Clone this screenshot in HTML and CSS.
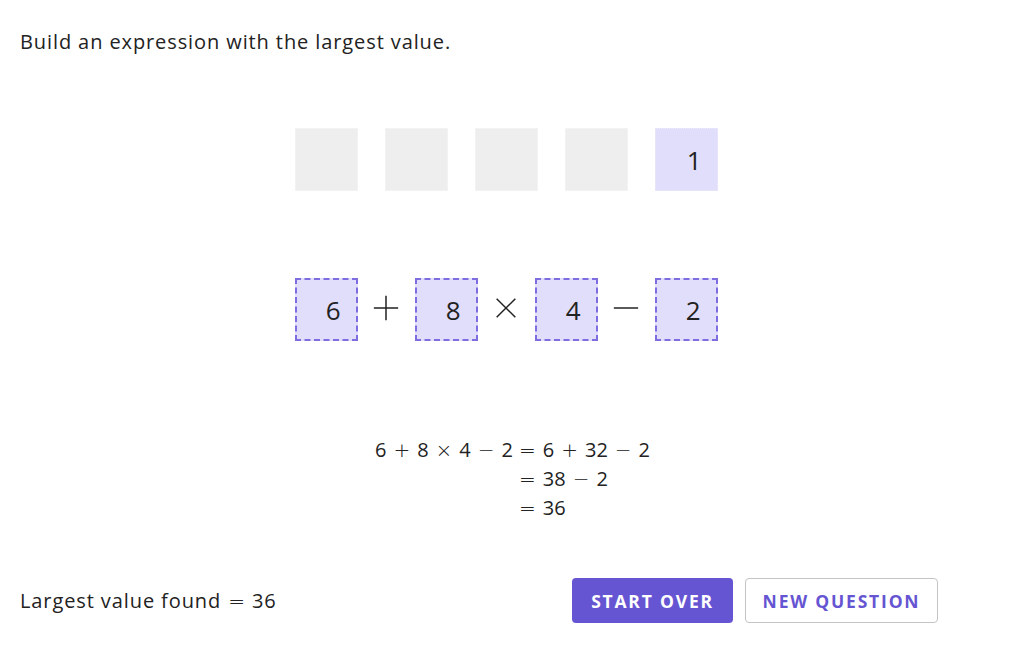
FILE: index.html
```html
<!DOCTYPE html>
<html lang="en">
<head>
    <meta charset="UTF-8" />
    <meta name="viewport" content="width=device-width, initial-scale=1.0" />
    <title>Largest Expression</title>
    <link rel="stylesheet" href="styles.css">
</head>
<body>
    <div class="app">
        <p class="prompt">Build an expression with the largest value.</p>

        <div class="tray">
            <div class="slot empty"></div>
            <div class="slot empty"></div>
            <div class="slot empty"></div>
            <div class="slot empty"></div>
            <div class="slot card">1</div>
        </div>

        <div class="expr">
            <div class="slot filled">6</div>
            <span class="op" aria-label="+">
                <svg width="30" height="30" viewBox="0 0 30 30"><path d="M15 2v26M2 15h26" /></svg>
            </span>
            <div class="slot filled">8</div>
            <span class="op" aria-label="&times;">
                <svg width="30" height="30" viewBox="0 0 30 30"><path d="M5 5l20 20M25 5L5 25" /></svg>
            </span>
            <div class="slot filled">4</div>
            <span class="op" aria-label="&minus;">
                <svg width="30" height="30" viewBox="0 0 30 30"><path d="M2 15h26" /></svg>
            </span>
            <div class="slot filled">2</div>
        </div>

        <div class="work">
            <span class="lhs">6<span class="mo">+</span>8<span class="mo">&times;</span>4<span class="mo">&minus;</span>2</span>
            <span class="rhs"><span class="mo eq">=</span>6<span class="mo">+</span>32<span class="mo">&minus;</span>2</span>
            <span class="lhs"></span>
            <span class="rhs"><span class="mo eq">=</span>38<span class="mo">&minus;</span>2</span>
            <span class="lhs"></span>
            <span class="rhs"><span class="mo eq">=</span>36</span>
        </div>

        <div class="footer">
            <p class="result">Largest value found<span class="mo">=</span>36</p>
            <div class="actions">
                <button class="btn btn-primary">Start over</button>
                <button class="btn btn-outline">New question</button>
            </div>
        </div>
    </div>
</body>
</html>
```

FILE: styles.css
```css
* {
    box-sizing: border-box;
    margin: 0;
    padding: 0;
}

body {
    background: #fff;
    color: #222;
    font-family: 'Open Sans', 'DejaVu Sans', sans-serif;
}

.app {
    padding: 29px 20px 20px;
}

.prompt {
    font-size: 20px;
    line-height: 26px;
    letter-spacing: 0.9px;
}

.tray, .expr {
    display: flex;
    justify-content: center;
    padding-right: 20px;
}

.tray {
    gap: 27px;
    margin-top: 73px;
}

.expr {
    margin-top: 87px;
}

.slot {
    width: 63px;
    height: 63px;
    display: flex;
    align-items: center;
    justify-content: flex-end;
    padding-right: 15px;
    font-size: 26px;
    color: #222;
}

.slot.empty {
    background: #eeeeee;
    border: 1px dotted #f7f7f7;
}

.slot.card {
    background: #e0defa;
    border: 1px dotted #ecebf8;
}

.slot.filled {
    background: #e0defa;
    border: 2px dashed #7d6de0;
}

.op {
    width: 57px;
    display: flex;
    align-items: center;
    justify-content: center;
    padding-bottom: 3px;
}

.op svg {
    width: 28px;
    height: 28px;
    stroke: #222;
    stroke-width: 1.6;
    fill: none;
}

.mo {
    font-family: 'DejaVu Sans', sans-serif;
    font-weight: 300;
    line-height: 1;
    margin: 0 7px;
}

.work {
    display: grid;
    grid-template-columns: 1fr 1fr;
    column-gap: 6px;
    margin-top: 94px;
    font-size: 20px;
    line-height: 29px;
}

.lhs {
    text-align: right;
}

.rhs {
    text-align: left;
}

.mo.eq {
    margin-left: 0;
}

.footer {
    display: flex;
    align-items: center;
    margin-top: 56px;
}

.result {
    flex: 1;
    font-size: 20px;
    line-height: 26px;
    letter-spacing: 0.9px;
}

.result .mo {
    margin: 0 7px;
    letter-spacing: 0;
}

.actions {
    display: flex;
    gap: 12px;
    margin-right: 74px;
}

.btn {
    height: 45px;
    border-radius: 4px;
    font-family: 'Open Sans', 'DejaVu Sans', sans-serif;
    font-size: 17.5px;
    font-weight: 700;
    letter-spacing: 1.8px;
    text-transform: uppercase;
    cursor: pointer;
}

.btn-primary {
    width: 161px;
    background: #6655d2;
    color: #fff;
    border: none;
}

.btn-outline {
    width: 193px;
    background: #fff;
    color: #6655d2;
    border: 1px solid #c4c4c4;
}
```
